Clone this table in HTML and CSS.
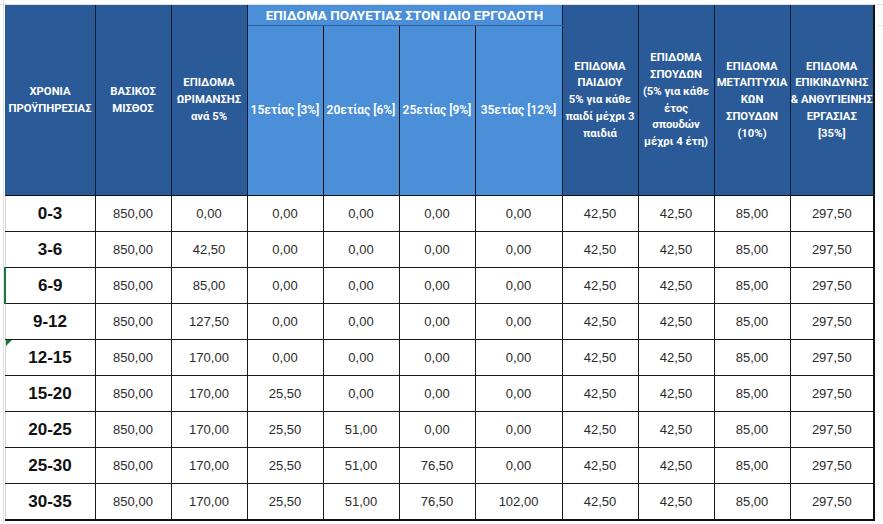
FILE: index.html
```html
<!DOCTYPE html>
<html lang="el">
<head>
<meta charset="utf-8">
<title>Επιδόματα</title>
<link rel="stylesheet" href="styles.css">
</head>
<body>
<div class="sheet">
<table class="pay">
  <colgroup>
    <col class="c-years"><col class="c76"><col class="c76"><col class="c76"><col class="c76"><col class="c76"><col class="c87"><col class="c76"><col class="c76"><col class="c76"><col class="c84">
  </colgroup>
  <thead>
    <tr class="h-top">
      <th rowspan="2" class="dark">ΧΡΟΝΙΑ<br>ΠΡΟΫΠΗΡΕΣΙΑΣ</th>
      <th rowspan="2" class="dark">ΒΑΣΙΚΟΣ<br>ΜΙΣΘΟΣ</th>
      <th rowspan="2" class="dark">ΕΠΙΔΟΜΑ<br>ΩΡΙΜΑΝΣΗΣ<br>ανά 5%</th>
      <th colspan="4" class="group">ΕΠΙΔΟΜΑ ΠΟΛΥΕΤΙΑΣ ΣΤΟΝ ΙΔΙΟ ΕΡΓΟΔΟΤΗ</th>
      <th rowspan="2" class="dark">ΕΠΙΔΟΜΑ<br>ΠΑΙΔΙΟΥ<br>5% για κάθε<br>παιδί μέχρι 3<br>παιδιά</th>
      <th rowspan="2" class="dark">ΕΠΙΔΟΜΑ<br>ΣΠΟΥΔΩΝ<br>(5% για κάθε<br>έτος<br>σπουδών<br>μέχρι 4 έτη)</th>
      <th rowspan="2" class="dark">ΕΠΙΔΟΜΑ<br>ΜΕΤΑΠΤΥΧΙΑ<br>ΚΩΝ<br>ΣΠΟΥΔΩΝ<br>(10%)</th>
      <th rowspan="2" class="dark last">ΕΠΙΔΟΜΑ<br>ΕΠΙΚΙΝΔΥΝΗΣ<br>&amp; ΑΝΘΥΓΙΕΙΝΗΣ<br>ΕΡΓΑΣΙΑΣ<br>[35%]</th>
    </tr>
    <tr class="h-sub">
      <th class="light first">15ετίας [3%]</th>
      <th class="light">20ετίας [6%]</th>
      <th class="light">25ετίας [9%]</th>
      <th class="light lastlight">35ετίας [12%]</th>
    </tr>
  </thead>
  <tbody>
    <tr><td class="yr">0-3</td><td>850,00</td><td>0,00</td><td>0,00</td><td>0,00</td><td>0,00</td><td>0,00</td><td>42,50</td><td>42,50</td><td>85,00</td><td class="last">297,50</td></tr>
    <tr><td class="yr">3-6</td><td>850,00</td><td>42,50</td><td>0,00</td><td>0,00</td><td>0,00</td><td>0,00</td><td>42,50</td><td>42,50</td><td>85,00</td><td class="last">297,50</td></tr>
    <tr><td class="yr sel">6-9</td><td>850,00</td><td>85,00</td><td>0,00</td><td>0,00</td><td>0,00</td><td>0,00</td><td>42,50</td><td>42,50</td><td>85,00</td><td class="last">297,50</td></tr>
    <tr><td class="yr">9-12</td><td>850,00</td><td>127,50</td><td>0,00</td><td>0,00</td><td>0,00</td><td>0,00</td><td>42,50</td><td>42,50</td><td>85,00</td><td class="last">297,50</td></tr>
    <tr><td class="yr flag">12-15</td><td>850,00</td><td>170,00</td><td>0,00</td><td>0,00</td><td>0,00</td><td>0,00</td><td>42,50</td><td>42,50</td><td>85,00</td><td class="last">297,50</td></tr>
    <tr><td class="yr">15-20</td><td>850,00</td><td>170,00</td><td>25,50</td><td>0,00</td><td>0,00</td><td>0,00</td><td>42,50</td><td>42,50</td><td>85,00</td><td class="last">297,50</td></tr>
    <tr><td class="yr">20-25</td><td>850,00</td><td>170,00</td><td>25,50</td><td>51,00</td><td>0,00</td><td>0,00</td><td>42,50</td><td>42,50</td><td>85,00</td><td class="last">297,50</td></tr>
    <tr><td class="yr">25-30</td><td>850,00</td><td>170,00</td><td>25,50</td><td>51,00</td><td>76,50</td><td>0,00</td><td>42,50</td><td>42,50</td><td>85,00</td><td class="last">297,50</td></tr>
    <tr class="final"><td class="yr">30-35</td><td>850,00</td><td>170,00</td><td>25,50</td><td>51,00</td><td>76,50</td><td>102,00</td><td>42,50</td><td>42,50</td><td>85,00</td><td class="last">297,50</td></tr>
  </tbody>
</table>
</div>
</body>
</html>
```

FILE: styles.css
```css
html, body {
  margin: 0;
  padding: 0;
  background: #ffffff;
}

.sheet {
  width: 883px;
  height: 524px;
  box-sizing: border-box;
  padding: 5px 0 0 4px;
  background:
    linear-gradient(#e2e2e2, #e2e2e2) 0 4px / 100% 1px no-repeat,
    linear-gradient(#e2e2e2, #e2e2e2) 3px 0 / 1px 100% no-repeat,
    linear-gradient(#e6e6e6, #e6e6e6) 877px 25px / 6px 1px no-repeat,
    #ffffff;
}

.pay {
  border-collapse: collapse;
  table-layout: fixed;
  width: 869px;
  font-family: "Liberation Sans", Arial, sans-serif;
}

.c-years { width: 90px; }
.c76 { width: 76px; }
.c87 { width: 87px; }
.c84 { width: 84px; }

.pay th {
  color: #ffffff;
  font-family: "Roboto", "Liberation Sans", sans-serif;
  font-weight: 700;
  font-size: 11.3px;
  line-height: 16.7px;
  padding: 0;
  text-align: center;
  vertical-align: middle;
  white-space: nowrap;
}

.pay th.dark {
  background: #2a5a97;
  border-left: 1px solid #0e1c30;
  border-right: 1px solid #0e1c30;
  border-top: 1px solid #2a5a97;
  border-bottom: 1px solid #111111;
}

.pay th.dark:first-child {
  border-left: 1px solid #2a5a97;
}

.pay th.dark.last {
  border-right: 2px solid #111111;
}

.pay th.group {
  background: #4a8fd8;
  font-size: 13.5px;
  height: 19px;
  line-height: 19px;
  border-top: 1px solid #4a8fd8;
  border-bottom: 1px solid #2c5f9c;
  border-left: 1px solid #1d3b63;
  border-right: 1px solid #0e1c30;
}

.pay th.light {
  background: #4a8fd8;
  font-weight: 600;
  font-size: 12px;
  height: 169px;
  border: 1px solid #111111;
  border-top: 1px solid #2c5f9c;
}

.pay th.light.first {
  border-left: 1px solid #1d3b63;
}

.pay td {
  height: 35px;
  padding: 0;
  text-align: center;
  vertical-align: middle;
  font-size: 13px;
  color: #2b2b2b;
  border: 1px solid #1a1a1a;
  white-space: nowrap;
}

.pay td.yr {
  font-size: 17px;
  font-weight: 700;
  color: #111111;
  border-left: 1px solid #d6d6d6;
  position: relative;
}

.pay td.last {
  border-right: 2px solid #111111;
}

.pay tr.final td {
  border-bottom: 2px solid #111111;
}

.pay td.sel {
  border-left: 2px solid #217346;
}

.pay td.flag::before {
  content: "";
  position: absolute;
  left: 0;
  top: 0;
  width: 0;
  height: 0;
  border-top: 6px solid #1e7a3a;
  border-right: 6px solid transparent;
}
```
